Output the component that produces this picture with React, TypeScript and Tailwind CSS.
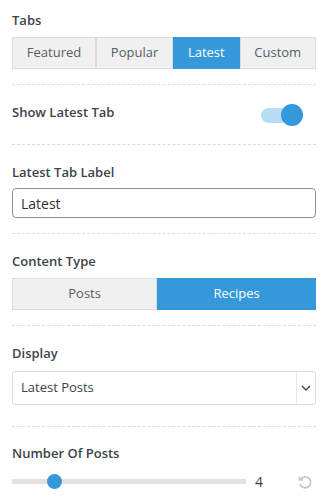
import { useState } from 'react';

const font = { fontFamily: '"Open Sans", "Noto Sans", sans-serif' };

function Divider() {
  return <div className="border-t border-dashed border-[#dcdcde]" />;
}

function Label({ children }: { children: React.ReactNode }) {
  return <div className="text-[13px] font-semibold text-[#3c434a] leading-[14px] h-[14px]">{children}</div>;
}

export default function App() {
  const [tab, setTab] = useState('Latest');
  const [type, setType] = useState('Recipes');
  const [show, setShow] = useState(true);
  const [count, setCount] = useState(4);

  const tabs = ['Featured', 'Popular', 'Latest', 'Custom'];
  const min = 1;
  const max = 20;
  const pct = (count - min) / (max - min);

  return (
    <div style={font} className="w-[324px] h-[502px] bg-white pl-3 pr-2 overflow-hidden">
      {/* Tabs */}
      <div className="pt-[13px] pb-[15px]">
        <Label>Tabs</Label>
        <div className="mt-[10px] flex h-[32px]">
          {tabs.map((t) => (
            <button
              key={t}
              onClick={() => setTab(t)}
              className={`flex-auto text-[13px] border ${
                tab === t
                  ? 'bg-[#3498db] border-[#3498db] text-white'
                  : 'bg-[#f0f0f0] border-[#dcdcde] text-[#555d66]'
              }`}
            >
              {t}
            </button>
          ))}
        </div>
      </div>
      <Divider />

      {/* Show latest tab */}
      <div className="flex items-center justify-between h-[59px]">
        <div className="-mt-[5px]">
          <Label>Show Latest Tab</Label>
        </div>
        <button
          onClick={() => setShow(!show)}
          className="relative w-[42px] h-[22px] mr-[13px]"
          aria-label="Toggle"
        >
          <span className={`absolute left-0 top-[4px] w-[32px] h-[15px] rounded-full ${show ? 'bg-[#b7dcf3]' : 'bg-[#ddd]'}`} />
          <span
            className={`absolute top-0 w-[22px] h-[22px] rounded-full ${show ? 'left-[20px] bg-[#3498db]' : 'left-0 bg-[#f5f5f5] shadow'}`}
          />
        </button>
      </div>
      <Divider />

      {/* Latest tab label */}
      <div className="pt-[20px] pb-[15px]">
        <Label>Latest Tab Label</Label>
        <input
          defaultValue="Latest"
          className="mt-[9px] block w-full h-[30px] border border-[#8c8f94] rounded-[4px] px-2 text-[14px] text-[#2c3338] outline-none"
        />
      </div>
      <Divider />

      {/* Content type */}
      <div className="pt-[20px] pb-[15px]">
        <Label>Content Type</Label>
        <div className="mt-[10px] flex h-[32px]">
          {['Posts', 'Recipes'].map((t) => (
            <button
              key={t}
              onClick={() => setType(t)}
              className={`flex-auto text-[13px] border ${
                type === t
                  ? 'bg-[#3498db] border-[#3498db] text-white'
                  : 'bg-[#f0f0f0] border-[#dcdcde] text-[#555d66]'
              }`}
            >
              {t}
            </button>
          ))}
        </div>
      </div>
      <Divider />

      {/* Display */}
      <div className="pt-[20px] pb-[21px]">
        <Label>Display</Label>
        <div className="mt-[11px] flex h-[34px] border border-[#dcdcde] rounded-[3px] text-[13px] text-[#3c434a]">
          <div className="flex-1 flex items-center px-2">Latest Posts</div>
          <div className="w-[19px] border-l border-[#e8e8e8] flex items-center justify-center">
            <svg width="10" height="6" viewBox="0 0 10 6" fill="none">
              <path d="M1 1l4 4 4-4" stroke="#3c434a" strokeWidth="1.3" />
            </svg>
          </div>
        </div>
      </div>
      <Divider />

      {/* Number of posts */}
      <div className="pt-[19px]">
        <Label>Number Of Posts</Label>
        <div className="mt-[14px] flex items-center h-[15px]">
          <div className="relative w-[234px] h-[15px] flex items-center">
            <div className="w-full h-[5px] bg-[#e2e2e2]" />
            <span
              className="absolute w-[15px] h-[15px] rounded-full bg-[#3498db]"
              style={{ left: `${pct * (234 - 15)}px` }}
            />
          </div>
          <span className="ml-[9px] text-[14px] text-[#3c434a] w-[20px]">{count}</span>
          <button onClick={() => setCount(4)} className="ml-auto mr-[3px]" aria-label="Reset">
            <svg width="16" height="16" viewBox="0 0 16 16" fill="none">
              <path d="M3.5 5.5A5.5 5.5 0 1 1 3 10" stroke="#c3c4c7" strokeWidth="1.6" />
              <path d="M2.5 2.5v3.5H6" stroke="#c3c4c7" strokeWidth="1.6" />
            </svg>
          </button>
        </div>
      </div>
    </div>
  );
}
